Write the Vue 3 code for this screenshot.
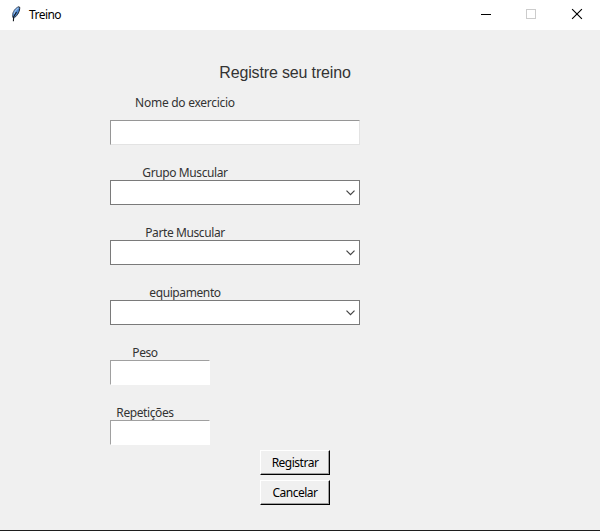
<script setup>
import { reactive } from 'vue'

const form = reactive({ name: '', group: '', part: '', equipment: '', weight: '', reps: '' })

const selects = [
  { key: 'group', label: 'Grupo Muscular' },
  { key: 'part', label: 'Parte Muscular' },
  { key: 'equipment', label: 'equipamento' },
]
const numbers = [
  { key: 'weight', label: 'Peso' },
  { key: 'reps', label: 'Repetições' },
]
</script>

<template>
  <div class="window">
    <header class="titlebar">
      <svg class="feather" width="12" height="18" viewBox="0 0 12 18">
        <path d="M2.6 12.5 C1.8 8.5 4 4 8.2 1.8 L9.7 2.2 C10 6 7.8 10 4.4 12.8 Z" fill="#4a86cf" />
        <path d="M4 9 C5 6 6.5 4.2 8.6 2.6" fill="none" stroke="#9cc2ee" stroke-width="1.2" />
        <path d="M2.6 12.5 C1.8 8.5 4 4 8.2 1.8" fill="none" stroke="#59616d" stroke-width="0.9" />
        <path d="M8.2 1.8 L9.7 2.2 C10 6 7.8 10 4.4 12.8" fill="none" stroke="#20262e" stroke-width="1" />
        <path d="M3.4 16.2 L3.6 12 L6.5 7" fill="none" stroke="#15191f" stroke-width="1.1" />
      </svg>
      <span class="title">Treino</span>
      <div class="controls">
        <svg width="46" height="30" viewBox="0 0 46 30" shape-rendering="crispEdges">
          <rect x="19" y="14" width="10" height="1" fill="#000" />
        </svg>
        <svg width="46" height="30" viewBox="0 0 46 30" shape-rendering="crispEdges">
          <rect x="18.5" y="9.5" width="9" height="9" fill="none" stroke="#ccc" />
        </svg>
        <svg width="46" height="30" viewBox="0 0 46 30">
          <path d="M18.1 9.1 L27.9 18.9 M27.9 9.1 L18.1 18.9" stroke="#000" stroke-width="1.15" />
        </svg>
      </div>
    </header>

    <main class="form">
      <h1>Registre seu treino</h1>
      <label class="label first" for="name">Nome do exercicio</label>
      <input id="name" v-model="form.name" class="entry wide" />

      <template v-for="s in selects" :key="s.key">
        <label class="label" :class="s.key">{{ s.label }}</label>
        <div class="combo" tabindex="0">
          <span>{{ form[s.key] }}</span>
          <svg width="9" height="6" viewBox="0 0 9 6">
            <path d="M0.5 0.6 L4.5 4.6 L8.5 0.6" fill="none" stroke="#444" stroke-width="1.2" />
          </svg>
        </div>
      </template>

      <template v-for="n in numbers" :key="n.key">
        <label class="label short" :class="n.key" :for="n.key">{{ n.label }}</label>
        <input :id="n.key" v-model="form[n.key]" class="entry small" />
      </template>

      <div class="actions">
        <button type="button">Registrar</button>
        <button type="button">Cancelar</button>
      </div>
    </main>
  </div>
</template>

<style>
body {
  margin: 0;
  background: #f0f0f0;
}
</style>

<style scoped>
.window {
  box-sizing: border-box;
  width: 600px;
  height: 531px;
  display: flex;
  flex-direction: column;
  background: #f0f0f0;
  border-bottom: 1px solid #1e1e1e;
  font-family: "Noto Sans", "Open Sans", sans-serif;
  font-size: 12px;
  color: #333;
  overflow: hidden;
}
.titlebar {
  height: 30px;
  display: flex;
  align-items: center;
  background: #fff;
  color: #000;
}
.feather {
  margin: 0 7px 2px 10px;
}
.title {
  line-height: 30px;
  letter-spacing: -0.55px;
}
.controls {
  display: flex;
  margin-left: auto;
}
.controls svg {
  display: block;
}
.form {
  display: flex;
  flex-direction: column;
  align-items: flex-start;
  padding: 30px 110px 0;
}
h1 {
  width: 350px;
  height: 25px;
  margin: 0 0 5px;
  font: 400 16px/25px "Liberation Sans", Arial, sans-serif;
  letter-spacing: -0.15px;
  text-align: center;
}
.label {
  width: 150px;
  height: 15px;
  margin-top: 20px;
  line-height: 16px;
  text-align: center;
  white-space: nowrap;
  letter-spacing: -0.4px;
}
.label.first {
  height: 25px;
  margin: 0 0 5px;
  line-height: 25px;
  letter-spacing: -0.27px;
}
.label.short {
  width: 70px;
}
.entry {
  box-sizing: border-box;
  height: 25px;
  margin: 0;
  padding: 1px 3px;
  border: 1px solid;
  border-color: #a0a0a0 #fff #fff #a0a0a0;
  border-radius: 0;
  background: #fff;
  font: inherit;
  outline: none;
}
.entry.wide {
  width: 250px;
  border-color: #969696 #e3e3e3 #e3e3e3 #969696;
}
.entry.small {
  width: 100px;
}
.combo {
  box-sizing: border-box;
  width: 250px;
  height: 25px;
  display: flex;
  align-items: center;
  justify-content: space-between;
  padding: 0 4px;
  border: 1px solid #7a7a7a;
  background: #fff;
}
.actions {
  display: flex;
  flex-direction: column;
  gap: 5px;
  margin: 5px 0 0 150px;
}
button {
  box-sizing: border-box;
  width: 70px;
  height: 25px;
  padding: 0;
  border: 1px solid;
  border-color: #fff #000 #000 #fff;
  border-radius: 0;
  background: #f0f0f0;
  box-shadow: inset -1px -1px 0 #a0a0a0;
  color: #000;
  font: inherit;
  line-height: 23px;
  letter-spacing: -0.5px;
}
</style>
